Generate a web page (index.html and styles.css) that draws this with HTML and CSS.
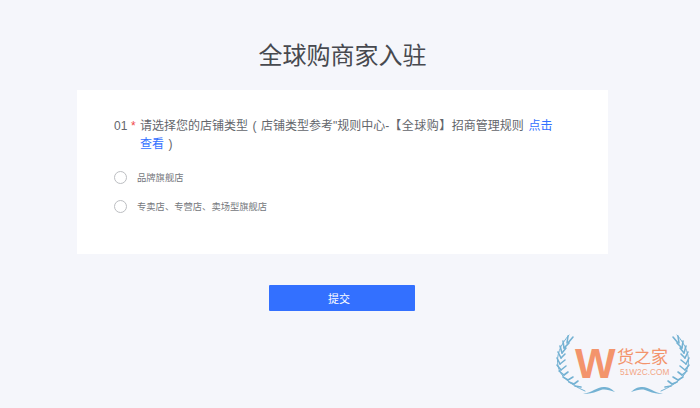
FILE: index.html
```html
<!DOCTYPE html>
<html>

<head>
    <meta charset="UTF-8">
    <title>全球购商家入驻</title>
    <link rel="stylesheet" href="styles.css">
</head>

<body>
    <div class="page">
        <h1 class="title">全球购商家入驻</h1>
        <div class="card">
            <div class="question">
                <span class="num">01</span>
                <span class="star">*</span>
                <p class="text">请选择您的店铺类型 ( 店铺类型参考"规则中心-<span class="bracket">【全球购】</span>招商管理规则 <a href="#">点击</a><a href="#">查看</a> )</p>
            </div>
            <label class="option"><span class="radio"></span><span>品牌旗舰店</span></label>
            <label class="option"><span class="radio"></span><span>专卖店、专营店、卖场型旗舰店</span></label>
        </div>
        <div class="actions">
            <button class="submit">提交</button>
        </div>
    </div>

    <div class="mark">
        <svg class="laurel" width="140" height="76" viewBox="0 0 140 76">
            <g fill="none" stroke="#74b2d3" stroke-width="1.6" stroke-linecap="round">
                <path d="M16 1C7 11 3 22 5 32C7 42 16 50 32 57" stroke-width="1" />
                <path d="M15 2L14 9M10 7L11 14M7 12L9 19M5 18L8 24M4 24L7 30M4 31L8 36M6 37L11 41M10 43L15 46M16 48L21 50M22 52L28 53" />
                <path d="M15 9L20 3M11 14L16 9M9 19L13 14M8 24L12 20M7 30L12 26M8 36L13 32M11 41L15 38M15 46L20 43M21 50L25 47" />
                <path d="M124 1C133 11 137 22 135 32C133 42 124 50 108 57" stroke-width="1" />
                <path d="M125 2L126 9M130 7L129 14M133 12L131 19M135 18L132 24M136 24L133 30M136 31L132 36M134 37L129 41M130 43L125 46M124 48L119 50M118 52L112 53" />
                <path d="M125 9L120 3M129 14L124 9M131 19L127 14M132 24L128 20M133 30L128 26M132 36L127 32M129 41L125 38M125 46L120 43M119 50L115 47" />
            </g>
            <g fill="#74b2d3">
                <path d="M30 59C38 60 44 52 52 53C56 53 60 56 62 58C56 56 52 55 48 56C42 58 36 61 30 59Z" />
                <path d="M110 59C102 60 96 52 88 53C84 53 80 56 78 58C84 56 88 55 92 56C98 58 104 61 110 59Z" />
            </g>
        </svg>
        <span class="mark-w">W</span>
        <span class="mark-name">货之家</span>
        <span class="mark-url">51W2C.COM</span>
    </div>
</body>

</html>
```

FILE: styles.css
```css
* {
    margin: 0;
    padding: 0;
    box-sizing: border-box;
}

body {
    height: 408px;
    overflow: hidden;
    background-color: #f5f6fb;
    font-family: "Liberation Sans", "Noto Sans CJK SC", sans-serif;
    position: relative;
}

.page {
    width: 531px;
    margin-left: 77px;
}

.title {
    padding-top: 40px;
    height: 90px;
    text-align: center;
    font-size: 24px;
    line-height: 32px;
    font-weight: 400;
    color: #47494f;
}

.card {
    height: 164px;
    padding: 27px 48px 0 37px;
    background-color: #fff;
}

.question {
    display: flex;
    font-size: 12px;
    line-height: 18px;
    color: #63666c;
    margin-bottom: 17px;
}

.num {
    width: 17px;
}

.star {
    width: 9px;
    color: #f0484a;
}

.text {
    flex: 1;
    word-spacing: 1.2px;
}

.text a {
    color: #3370ff;
    text-decoration: none;
}

.bracket {
    letter-spacing: 0.5px;
}

.option {
    display: flex;
    align-items: center;
    height: 14px;
    margin-bottom: 15px;
    font-size: 9.3px;
    color: #74777c;
}

.radio {
    width: 13px;
    height: 13px;
    margin-right: 10px;
    border: 1px solid #bcbec2;
    border-radius: 50%;
    background-color: #fff;
}

.actions {
    display: flex;
    padding: 31px 0 0 192px;
}

.submit {
    width: 146px;
    height: 26px;
    padding-right: 6px;
    border: 0;
    border-radius: 1px;
    background-color: #3370ff;
    color: #fff;
    font-family: inherit;
    font-size: 11px;
}

.mark {
    position: absolute;
    left: 553px;
    top: 334px;
    width: 140px;
    height: 76px;
}

.laurel {
    position: absolute;
    left: 0;
    top: 0;
}

.mark-w {
    position: absolute;
    left: 22px;
    top: 6px;
    font-size: 43px;
    line-height: 46px;
    font-weight: 700;
    color: #f3946c;
}

.mark-name {
    position: absolute;
    left: 64px;
    top: 14px;
    font-size: 17px;
    line-height: 20px;
    color: #f3946c;
}

.mark-url {
    position: absolute;
    left: 67px;
    top: 33px;
    font-size: 8.3px;
    line-height: 11px;
    color: #f3a686;
}
```
